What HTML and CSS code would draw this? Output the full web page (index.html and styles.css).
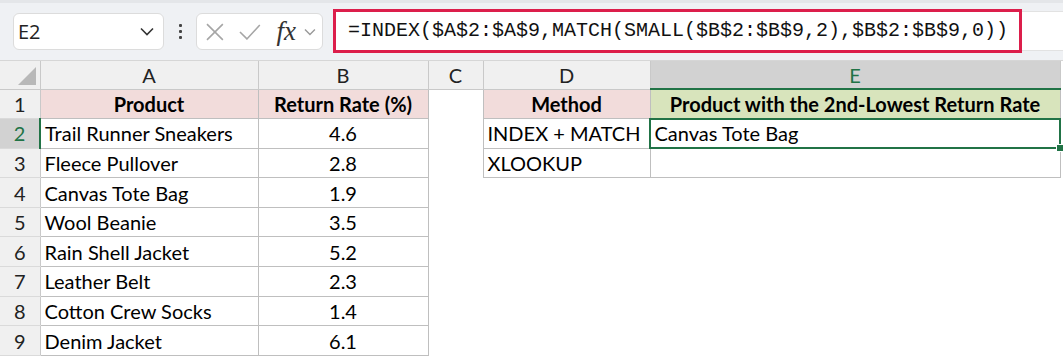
FILE: index.html
```html
<!DOCTYPE html>
<html lang="en">

<head>
    <meta charset="UTF-8">
    <title>Return Rate Lookup</title>
    <link rel="stylesheet" href="styles.css">
</head>

<body>
    <div class="toolbar">
        <div class="name-box">
            <span>E2</span>
            <svg width="14" height="9" viewBox="0 0 14 9"><path d="M1 1.5 L7 7.5 L13 1.5" fill="none" stroke="#333" stroke-width="1.6"/></svg>
        </div>
        <div class="dots"><i></i><i></i><i></i></div>
        <div class="fx-box">
            <svg width="18" height="18" viewBox="0 0 18 18"><path d="M1 1 L17 17 M17 1 L1 17" stroke="#a6a6a6" stroke-width="1.6"/></svg>
            <svg width="22" height="16" viewBox="0 0 22 16"><path d="M1 8 L8 15 L21 1" fill="none" stroke="#a6a6a6" stroke-width="1.6"/></svg>
            <span class="fx">fx</span>
            <svg width="12" height="8" viewBox="0 0 12 8"><path d="M1 1.5 L6 6.5 L11 1.5" fill="none" stroke="#999" stroke-width="1.4"/></svg>
        </div>
        <div class="formula-row">
            <div class="formula">=INDEX($A$2:$A$9,MATCH(SMALL($B$2:$B$9,2),$B$2:$B$9,0))</div>
            <div class="formula-rest"></div>
        </div>
    </div>

    <table class="sheet">
        <colgroup>
            <col class="c-head">
            <col class="c-a">
            <col class="c-b">
            <col class="c-c">
            <col class="c-d">
            <col class="c-e">
        </colgroup>
        <thead>
            <tr>
                <th class="corner"><span class="tri"></span></th>
                <th>A</th>
                <th>B</th>
                <th>C</th>
                <th>D</th>
                <th class="active-col">E</th>
            </tr>
        </thead>
        <tbody>
            <tr>
                <td class="rh">1</td>
                <td class="hd pink">Product</td>
                <td class="hd pink">Return Rate (%)</td>
                <td class="blank"></td>
                <td class="hd pink">Method</td>
                <td class="hd green">Product with the 2nd-Lowest Return Rate</td>
            </tr>
            <tr>
                <td class="rh active-row">2</td>
                <td class="b">Trail Runner Sneakers</td>
                <td class="b num">4.6</td>
                <td class="blank"></td>
                <td class="b">INDEX + MATCH</td>
                <td class="b selected">Canvas Tote Bag<span class="handle"></span></td>
            </tr>
            <tr>
                <td class="rh">3</td>
                <td class="b">Fleece Pullover</td>
                <td class="b num">2.8</td>
                <td class="blank"></td>
                <td class="b">XLOOKUP</td>
                <td class="b"></td>
            </tr>
            <tr>
                <td class="rh">4</td>
                <td class="b">Canvas Tote Bag</td>
                <td class="b num">1.9</td>
                <td class="blank" colspan="3"></td>
            </tr>
            <tr>
                <td class="rh">5</td>
                <td class="b">Wool Beanie</td>
                <td class="b num">3.5</td>
                <td class="blank" colspan="3"></td>
            </tr>
            <tr>
                <td class="rh">6</td>
                <td class="b">Rain Shell Jacket</td>
                <td class="b num">5.2</td>
                <td class="blank" colspan="3"></td>
            </tr>
            <tr>
                <td class="rh">7</td>
                <td class="b">Leather Belt</td>
                <td class="b num">2.3</td>
                <td class="blank" colspan="3"></td>
            </tr>
            <tr>
                <td class="rh">8</td>
                <td class="b">Cotton Crew Socks</td>
                <td class="b num">1.4</td>
                <td class="blank" colspan="3"></td>
            </tr>
            <tr>
                <td class="rh">9</td>
                <td class="b">Denim Jacket</td>
                <td class="b num">6.1</td>
                <td class="blank" colspan="3"></td>
            </tr>
        </tbody>
    </table>
</body>

</html>
```

FILE: styles.css
```css
body {
    margin: 0;
    font-family: Lato, "Open Sans", sans-serif;
    background: #fff;
    color: #000;
}

/* top bar with name box and formula */
.toolbar {
    height: 57px;
    display: flex;
    align-items: center;
    padding-left: 13px;
    background: #eff1f4;
    border-top: 3px solid #e4e6e9;
    border-bottom: 1px solid #d6d6d6;
    box-sizing: content-box;
}

.name-box {
    width: 151px;
    height: 37px;
    box-sizing: border-box;
    background: #fff;
    border: 1px solid #dcdcdc;
    border-radius: 6px;
    display: flex;
    align-items: center;
    justify-content: space-between;
    padding: 0 9px 0 4px;
    font-family: "Open Sans", sans-serif;
    font-size: 20px;
    color: #222;
}

.dots {
    width: 32px;
    display: flex;
    flex-direction: column;
    align-items: center;
    gap: 3px;
}

.dots i {
    width: 3px;
    height: 3px;
    background: #444;
    border-radius: 1px;
}

.fx-box {
    width: 127px;
    height: 37px;
    box-sizing: border-box;
    background: #fff;
    border: 1px solid #dcdcdc;
    border-radius: 6px;
    display: flex;
    align-items: center;
    padding: 0 6px 0 9px;
    gap: 15px;
}

.fx-box .fx {
    font-family: "Liberation Serif", serif;
    font-style: italic;
    font-size: 27px;
    color: #333;
    margin-left: 1px;
    margin-right: -7px;
    line-height: 1;
}

.formula-row {
    flex: 1;
    display: flex;
    align-items: center;
    margin-left: 10px;
    margin-top: -2px;
}

.formula {
    width: 689px;
    height: 44px;
    box-sizing: border-box;
    border: 3px solid #dc1e4b;
    background: #fff;
    font-family: "Liberation Mono", monospace;
    font-size: 20px;
    line-height: 38px;
    padding-left: 12px;
    color: #111;
    white-space: nowrap;
}

.formula-rest {
    flex: 1;
    height: 38px;
    background: #fff;
    border-top: 1px solid #e2e2e2;
    border-bottom: 1px solid #e2e2e2;
}

/* worksheet grid */
.sheet {
    border-collapse: collapse;
    table-layout: fixed;
    width: 1060px;
    font-size: 20px;
}

.c-head { width: 40px; }
.c-a { width: 218px; }
.c-b { width: 170px; }
.c-c { width: 55px; }
.c-d { width: 167px; }
.c-e { width: 410px; }

thead tr {
    height: 28px;
}

tbody tr {
    height: 29.6px;
}

th {
    padding: 0;
    background: #f0f0f0;
    font-weight: normal;
    color: #222;
    border-right: 1px solid #c9c9c9;
    border-bottom: 1px solid #c9c9c9;
    line-height: 1;
}

th.corner {
    position: relative;
}

.tri {
    position: absolute;
    right: 4px;
    bottom: 4px;
    width: 0;
    height: 0;
    border-left: 18px solid transparent;
    border-bottom: 18px solid #b8b8b8;
}

th.active-col {
    background: #d2d2d2;
    color: #217346;
    border-bottom: 2px solid #217346;
}

td {
    padding: 0 4px;
    white-space: nowrap;
    overflow: hidden;
    line-height: 1;
}

td.rh {
    padding: 0;
    text-align: center;
    background: #f0f0f0;
    color: #222;
    border-right: 1px solid #c9c9c9;
    border-bottom: 1px solid #dadada;
}

td.active-row {
    background: #d2d2d2;
    color: #217346;
    border-right: 2px solid #217346;
}

td.b,
td.hd {
    border: 1px solid #bfbfbf;
}

td.hd {
    font-weight: bold;
    text-align: center;
}

.pink {
    background: #f2dcdb;
}

.green {
    background: #d8e4bc;
}

.num {
    text-align: center;
}

td.selected {
    position: relative;
    outline: 2px solid #217346;
    outline-offset: -1px;
    overflow: visible;
}

.handle {
    position: absolute;
    right: -4px;
    bottom: -4px;
    width: 6px;
    height: 6px;
    background: #217346;
    border: 1px solid #fff;
}
```
